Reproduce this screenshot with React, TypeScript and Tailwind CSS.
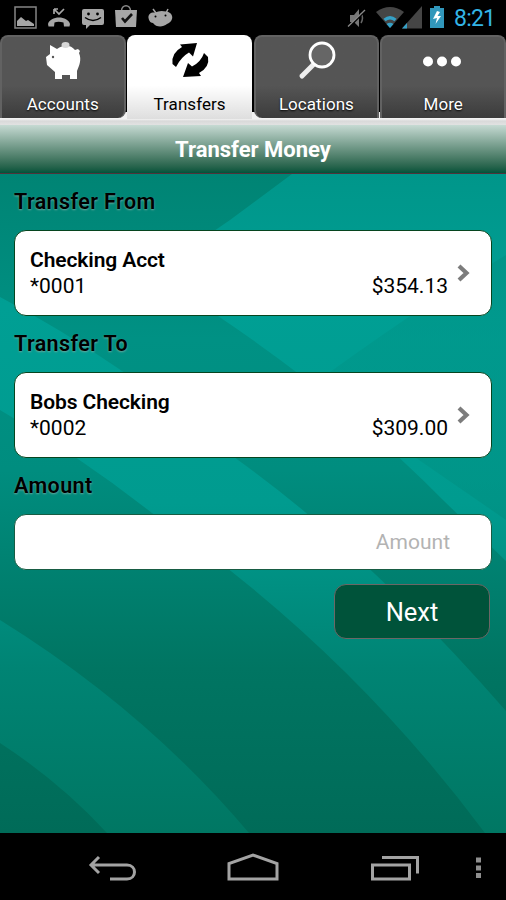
import React from 'react';

interface TabProps {
  label: string;
  active?: boolean;
  corners?: string;
  children: React.ReactNode;
}

interface AccountCardProps {
  name: string;
  number: string;
  balance: string;
}

const StatusBar = () => (
  <div className="h-[35px] shrink-0 bg-black flex">
    <svg width="506" height="35" viewBox="0 0 506 35">
      {/* Gallery */}
      <rect x="15" y="7" width="21" height="21" fill="none" stroke="#858585" strokeWidth="1.5" />
      <path d="M17 26V21L21 17L26 21L28 20L34 24V26Z" fill="#a6a6a6" />
      {/* Missed call */}
      <path d="M54 9V14M54 9H58M54 9L59 14L64 9" fill="none" stroke="#a6a6a6" strokeWidth="1.7" />
      <path d="M48 24C49 20 54 17.500 59 17.500C64 17.500 69 20 70 24L69.500 26.500H64L63.500 22.500C60 21.500 57 21.500 54.500 22.500L54 26.500H48.500Z" fill="#a6a6a6" />
      {/* Message */}
      <path d="M84 9H102Q104 9 104 11V23Q104 25 102 25H90L86 29V25H84Q82 25 82 23V11Q82 9 84 9Z" fill="#a6a6a6" />
      <circle cx="88.500" cy="14" r="1.400" />
      <circle cx="97.500" cy="14" r="1.400" />
      <path d="M85 17.500Q93 23.500 101 17.500" fill="none" stroke="#000" strokeWidth="1.5" />
      {/* Store */}
      <path d="M121.500 11C121.500 4 130.500 4 130.500 11" fill="none" stroke="#8b8b8b" strokeWidth="1.5" />
      <path d="M115 10H137L136 27H116Z" fill="#a6a6a6" />
      <path d="M122 18L125 21.500L132 14" fill="none" stroke="#111" strokeWidth="2.6" />
      {/* Android head */}
      <path d="M153 9L156 13M168 9L166 13" stroke="#a6a6a6" strokeWidth="1.5" />
      <path d="M148.500 18C148 14 151 12 155 12.500Q160 10 166 11.500C171 12 173 16 172 19C171 22 169 23 167 24C163 27.500 156 27.500 153 23C150 23 149 20 148.500 18Z" fill="#a6a6a6" />
      <circle cx="155.500" cy="16.500" r="1" />
      <circle cx="165.500" cy="15.500" r="1" />
      {/* Muted speaker */}
      <path d="M350 15H354L359 9V27L354 22H350Z" fill="#777" />
      <path d="M361 13Q364 18 361 23" fill="none" stroke="#666" strokeWidth="1.5" />
      <path d="M348 28L365 11" stroke="#000" strokeWidth="2" />
      <path d="M348 26.500L365 10" stroke="#8a8a8a" strokeWidth="1.3" />
      {/* Wifi */}
      <path d="M376 12Q390 2 404 12L390 28Z" fill="#454545" />
      <path d="M384.500 20Q390 15.500 395.500 20" fill="none" stroke="#35a0c6" strokeWidth="3.2" />
      <path d="M386.500 24Q390 21.500 393.500 24L390 28Z" fill="#35a0c6" />
      {/* Signal */}
      <path d="M402 28.500L422 6V28.500Z" fill="#454545" />
      <path d="M402 28.500L407 23V28.500Z" fill="#35a0c6" />
      {/* Battery */}
      <path d="M430 8H434V6H440V8H444V28H430Z" fill="#3197bb" />
      <path d="M437 11L433 19L437 18L435.500 24L441 16H437.500L440 12Z" fill="#fff" />
      <text x="454" y="26" fontSize="23" fill="#33b5e5" fontFamily="Roboto, sans-serif" textLength="42">8:21</text>
    </svg>
  </div>
);

const Tab = ({ label, active, corners, children }: TabProps) => {
  const look = active
    ? 'h-[84px] rounded-t-[8px] bg-linear-to-b from-white from-60% to-[#dedede] text-black'
    : `h-[83px] rounded-t-[8px] border-2 border-b-0 border-[#626262] bg-linear-to-b from-[#555] from-60% to-[#3c3c3c] text-white [text-shadow:0_1px_2px_#000] ${corners}`;
  return (
    <button className={`relative w-[125.500px] shrink-0 ${look}`}>
      <svg className={`absolute ${active ? 'left-0 top-0' : '-left-0.5 -top-0.5'}`} width="126" height="60" viewBox="0 0 126 60">
        {children}
      </svg>
      <span className={`absolute inset-x-0 text-center text-[17px] leading-5 tracking-[0.05px] ${active ? 'top-[59px]' : 'top-[57px]'}`}>{label}</span>
    </button>
  );
};

const TabBar = () => (
  <div className="h-[90px] shrink-0 bg-[linear-gradient(#000_77px,#f2f2f2_77px,#f2f2f2_84px,#d9d9d9_86px,#e2e2e2_90px)]">
    <div className="flex justify-between">
      <Tab label="Accounts" corners="rounded-br-[8px]">
        <path d="M50 10L57 14C64 9 71 10 75 15L78 14L80 16L79 18C82 25 79 31 77 36V44H70V40H62V44H55V37L47 30L46 22L50 19Z" fill="#fff" />
        <ellipse cx="65.500" cy="10" rx="4" ry="3" fill="#d8d8d8" />
        <circle cx="53" cy="22" r="1.200" fill="#555" />
      </Tab>
      <Tab label="Transfers" active>
        <path d="M49 32L45.500 29Q44 18 55 12L53 9.500L70 8L66 21.500L62 17.500Q54 22 49 32Z" />
        <path d="M77 18L81 22Q83 32 72 38L74 41L56 42L61 28L65 31.500Q74 27 77 18Z" />
      </Tab>
      <Tab label="Locations" corners="rounded-bl-[8px]">
        <path d="M48 41L59 30" stroke="#eee" strokeWidth="5" strokeLinecap="round" />
        <circle cx="68" cy="20" r="12" fill="#666" stroke="#fff" strokeWidth="2.8" />
      </Tab>
      <Tab label="More" corners="">
        <circle cx="48" cy="26.500" r="5" fill="#fff" />
        <circle cx="62" cy="26.500" r="5" fill="#fff" />
        <circle cx="76" cy="26.500" r="5" fill="#fff" />
      </Tab>
    </div>
  </div>
);

// Curved bands behind the form
const Backdrop = () => (
  <svg className="absolute inset-0" width="506" height="659" viewBox="0 174 506 659">
    <defs>
      <linearGradient id="light" x1="0" y1="174" x2="0" y2="833" gradientUnits="userSpaceOnUse">
        <stop offset="0" stopColor="#00968a" />
        <stop offset="0.2" stopColor="#009f94" />
        <stop offset="0.5" stopColor="#009b8f" />
        <stop offset="0.75" stopColor="#008474" />
        <stop offset="1" stopColor="#007763" />
      </linearGradient>
      <linearGradient id="dark" x1="0" y1="174" x2="0" y2="833" gradientUnits="userSpaceOnUse">
        <stop offset="0" stopColor="#008474" />
        <stop offset="0.25" stopColor="#009184" />
        <stop offset="0.45" stopColor="#008d7f" />
        <stop offset="0.75" stopColor="#007562" />
        <stop offset="1" stopColor="#006b58" />
      </linearGradient>
    </defs>
    <rect y="174" width="506" height="659" fill="url(#light)" />
    <path d="M506 255Q430 300 330 372L390 440L506 520Z" fill="url(#dark)" opacity="0.4" />
    <path d="M0 174H292L230 220L150 275Q200 300 218 316Q350 405 443 500L506 561V711Q370 555 238 460Q120 360 0 297Z" fill="url(#dark)" />
    <path d="M0 410Q78 455 152 513Q345 645 485 833H249Q145 710 0 620Z" fill="url(#dark)" />
    <path d="M0 743Q60 782 107 833H0Z" fill="url(#dark)" />
  </svg>
);

const SectionLabel = ({ children }: { children: React.ReactNode }) => (
  <h2 className="h-[56px] pt-[15px] text-[21.500px] leading-[26px] font-semibold tracking-[0.4px] [text-shadow:0_1px_2px_#6aa99f]">{children}</h2>
);

const AccountCard = ({ name, number, balance }: AccountCardProps) => (
  <button className="h-[86px] w-full rounded-[12px] border border-[#06451f] bg-white pl-[15px] pr-[21px] flex items-center text-left">
    <div className="flex-1 text-[21px] leading-[26px]">
      <div className="font-semibold tracking-[-0.1px]">{name}</div>
      <div className="flex justify-between pr-[9px]">
        <span>{number}</span>
        <span>{balance}</span>
      </div>
    </div>
    <svg width="13" height="18" viewBox="0 0 13 18">
      <path d="M2 2L9.500 9L2 16" fill="none" stroke="#7c7c7c" strokeWidth="4.200" />
    </svg>
  </button>
);

const NavBar = () => (
  <div className="h-[67px] shrink-0 bg-black">
    <svg width="506" height="67" viewBox="0 833 506 67" fill="none" stroke="#a3a3a3" strokeWidth="3">
      <path d="M92 865H127C137 865 137 879 127 879H110M99 857L91 865L99 873" />
      <path d="M229 879V863.500L253 855L277 863.500V879Z" />
      <path d="M372.500 865H409.500V879H372.500ZM382 857.500H417.500V873.500" />
      <path d="M476 860H481M476 868H481M476 875.500H481" strokeWidth="5" stroke="#8f8f8f" />
    </svg>
  </div>
);

const App = () => {
  return (
    <div className="w-[506px] h-[900px] overflow-hidden flex flex-col bg-black font-[Roboto,sans-serif] text-black">
      <StatusBar />
      <TabBar />
      <header className="h-[49px] shrink-0 border-b border-[#50333a] bg-linear-to-b from-[#c6dad3] to-[#00533a] text-center">
        <h1 className="pt-[11px] text-[22px] leading-[27px] font-bold text-white">Transfer Money</h1>
      </header>
      <main className="relative h-[659px] shrink-0">
        <Backdrop />
        <form className="relative px-3.5 flex flex-col">
          <SectionLabel>Transfer From</SectionLabel>
          <AccountCard name="Checking Acct" number="*0001" balance="$354.13" />
          <SectionLabel>Transfer To</SectionLabel>
          <AccountCard name="Bobs Checking" number="*0002" balance="$309.00" />
          <SectionLabel>Amount</SectionLabel>
          <input
            className="h-[56px] w-full rounded-[12px] border border-[#175c43] bg-white pl-4 pr-[41px] text-right text-[21px] outline-none placeholder:text-[#b3b3b3]"
            placeholder="Amount"
          />
          <button
            type="button"
            className="mt-3.5 mr-0.5 h-[55px] w-[156px] self-end rounded-[12px] border-[1.500px] border-[#6c6765] bg-[#00533a] pt-0.5 text-[25.500px] text-white"
          >
            Next
          </button>
        </form>
      </main>
      <NavBar />
    </div>
  );
};

export default App;
